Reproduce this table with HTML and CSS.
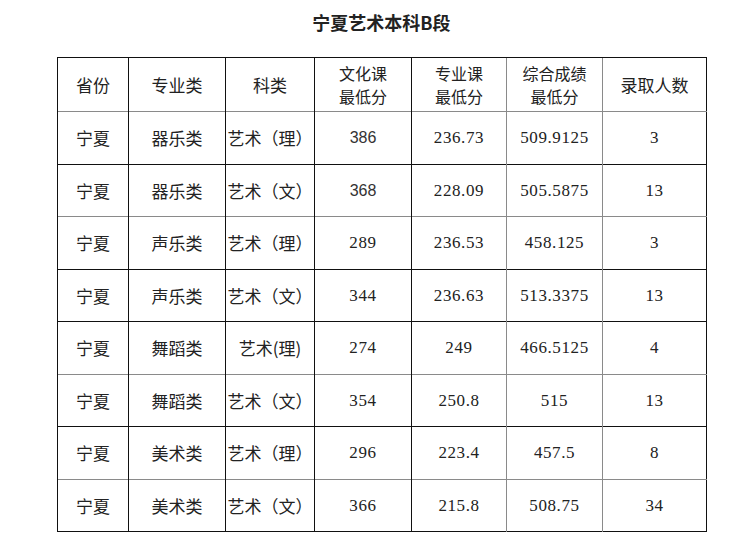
FILE: index.html
```html
<!DOCTYPE html>
<html lang="zh-CN">
<head>
<meta charset="utf-8">
<link rel="stylesheet" href="styles.css">
</head>
<body>
<div class="page">
  <h1 class="title">宁夏艺术本科B段</h1>
  <table class="score">
    <colgroup>
      <col class="c1"><col class="c2"><col class="c3"><col class="c4"><col class="c5"><col class="c6"><col class="c7">
    </colgroup>
    <tr class="head">
      <td>省份</td><td>专业类</td><td>科类</td><td class="two">文化课<br>最低分</td><td class="two">专业课<br>最低分</td><td class="two">综合成绩<br>最低分</td><td>录取人数</td>
    </tr>
    <tr class="gray">
      <td>宁夏</td><td>器乐类</td><td>艺术（理）</td><td class="sans">386</td><td class="num">236.73</td><td class="num">509.9125</td><td class="num">3</td>
    </tr>
    <tr class="dark">
      <td>宁夏</td><td>器乐类</td><td>艺术（文）</td><td class="sans">368</td><td class="num">228.09</td><td class="num">505.5875</td><td class="num">13</td>
    </tr>
    <tr class="gray">
      <td>宁夏</td><td>声乐类</td><td>艺术（理）</td><td class="num">289</td><td class="num">236.53</td><td class="num">458.125</td><td class="num">3</td>
    </tr>
    <tr class="dark">
      <td>宁夏</td><td>声乐类</td><td>艺术（文）</td><td class="num">344</td><td class="num">236.63</td><td class="num">513.3375</td><td class="num">13</td>
    </tr>
    <tr class="dark">
      <td>宁夏</td><td>舞蹈类</td><td>艺术(理)</td><td class="num">274</td><td class="num">249</td><td class="num">466.5125</td><td class="num">4</td>
    </tr>
    <tr class="gray">
      <td>宁夏</td><td>舞蹈类</td><td>艺术（文）</td><td class="num">354</td><td class="num">250.8</td><td class="num">515</td><td class="num">13</td>
    </tr>
    <tr class="dark">
      <td>宁夏</td><td>美术类</td><td>艺术（理）</td><td class="num">296</td><td class="num">223.4</td><td class="num">457.5</td><td class="num">8</td>
    </tr>
    <tr class="gray">
      <td>宁夏</td><td>美术类</td><td>艺术（文）</td><td class="num">366</td><td class="num">215.8</td><td class="num">508.75</td><td class="num">34</td>
    </tr>
  </table>
</div>
</body>
</html>
```
FILE: styles.css
```css
html, body {
  margin: 0;
  padding: 0;
  background: #ffffff;
}
body {
  font-family: "Noto Sans CJK SC", "Liberation Sans", sans-serif;
  color: #222222;
}
.page {
  padding: 12px 0 0 57px;
}
.title {
  width: 649px;
  margin: 0 0 25px 0;
  font-size: 18px;
  line-height: 20px;
  font-weight: bold;
  text-align: center;
  color: #222222;
}
.score {
  width: 649px;
  border-collapse: collapse;
  table-layout: fixed;
  border: 1px solid #111111;
}
.c1 { width: 71px; }
.c2 { width: 97px; }
.c3 { width: 89px; }
.c4 { width: 97px; }
.c5 { width: 95px; }
.c6 { width: 96px; }
.c7 { width: 104px; }
.score td {
  padding: 1px 0 0 0;
  text-align: center;
  vertical-align: middle;
  font-size: 17px;
  line-height: 22px;
  border-left: 1px solid #111111;
  border-top: 1px solid #111111;
  white-space: nowrap;
  height: 52.5px;
  box-sizing: border-box;
}
.score td:nth-child(6),
.score td:nth-child(7) {
  border-left: 1px solid #8a8a8a;
}
.score tr.head td {
  height: 54px;
}
.score tr.gray td {
  border-top: 1px solid #8a8a8a;
}
.score td.two {
  font-size: 16px;
  line-height: 23px;
}
.score td.num {
  font-family: "Liberation Serif", "Noto Sans CJK SC", serif;
  font-size: 17px;
  letter-spacing: 0.6px;
}
.score td.sans {
  font-family: "Liberation Sans", sans-serif;
  font-size: 16px;
  font-weight: normal;
  color: #333333;
}
```
